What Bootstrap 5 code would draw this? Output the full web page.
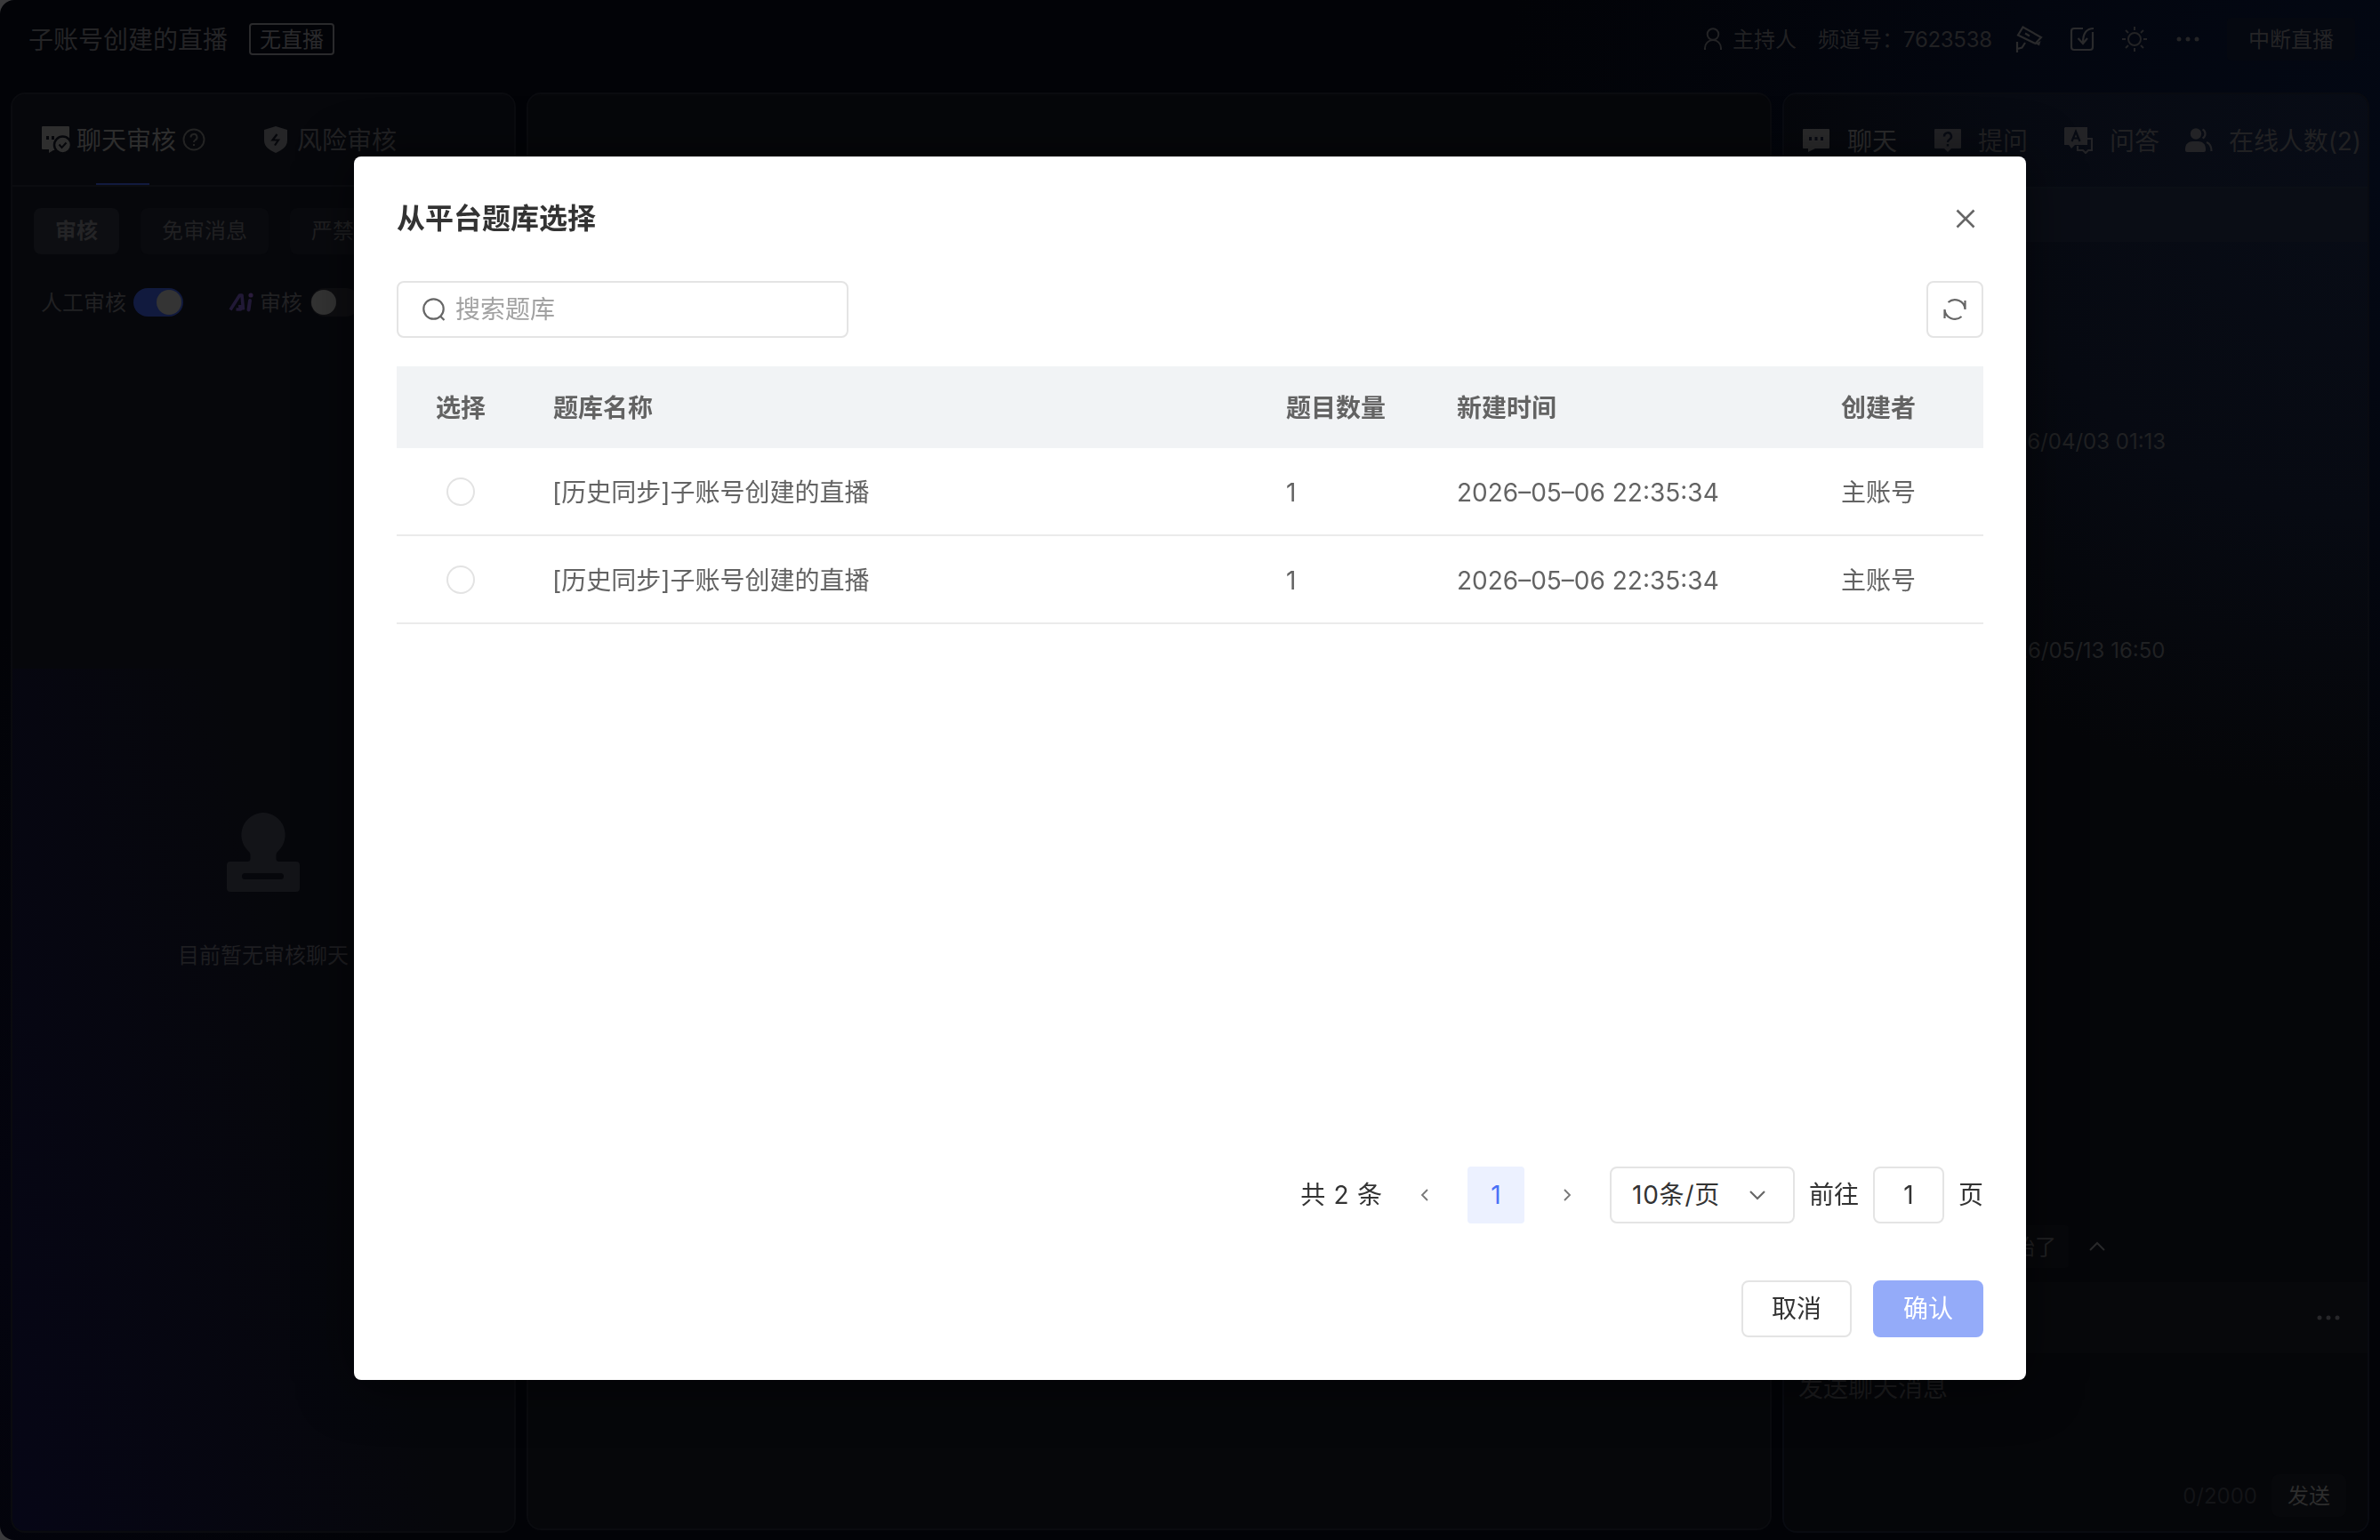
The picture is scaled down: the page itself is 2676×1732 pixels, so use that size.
<!DOCTYPE html>
<html lang="zh-CN">
<head>
<meta charset="utf-8">
<title>直播管理</title>
<link rel="stylesheet" href="https://cdn.jsdelivr.net/npm/bootstrap@5.3.0/dist/css/bootstrap.min.css">
<style>
html{background:#3a3a3c;font-size:16px}
body{width:2676px;height:1732px;margin:0;overflow:hidden;font-family:Inter,"Noto Sans CJK SC",sans-serif;font-size:24px;line-height:1;color:#212123;background:#3a3a3c}
svg{display:block;flex:none}
.shell{height:1732px;border-radius:16px 0 0 16px;overflow:hidden;background:radial-gradient(ellipse 1000px 900px at 2676px 200px,#030814 0,#03060f 45%,rgba(2,3,7,0) 100%),radial-gradient(ellipse 500px 700px at 0 1400px,#04040f 0,rgba(2,3,7,0) 100%),#020307}
.topbar{height:104px;padding:0 28px 16px 32px}
.topbar span,.tabs-l span,.tabs-r span,.send-btn,.quick{padding-top:2px}
.room-title{font-size:28px;color:#242426}
.live-tag{width:96px;height:36px;border:2px solid #2a2a2c;border-radius:4px;margin-left:24px;color:#2a2a2c}
.stop-btn{width:144px;height:48px;border-radius:4px;background:#050810;color:#242426}
.panels{height:1620px;padding:0 12px}
.pane{border:2px solid #0a0b0f;border-radius:16px;background:#06070b}
.pane-left{width:568px;margin-right:12px;background:linear-gradient(75deg,#060616 0,rgba(6,7,11,0) 60%) bottom/100% 60% no-repeat,#06070b}
.pane-mid{width:1400px;margin-right:12px;height:1617px;background:#06070a}
.pane-right{width:660px;overflow:hidden;border-color:#090b11;background:radial-gradient(ellipse 760px 700px at 100% 90px,#080c16 0,#070a12 55%,rgba(5,6,10,0) 100%),#050609}
.tabs-l{height:104px;border-bottom:2px solid #0b0c10;padding-left:33px;font-size:28px}
.tab-on{position:relative;color:#2d2d2d}
.tab-on::after{content:"";position:absolute;left:61px;width:60px;height:2px;bottom:0;background:#111a3f}
.chip{height:52px;border-radius:8px;padding:0 24px;background:#090a0e;color:#202022}
.chip-on{background:#0d0e12;font-weight:600;color:#242426}
.toggle{width:56px;height:32px;border-radius:16px;padding:2px;background:#0e0e11}
.toggle i{width:28px;height:28px;border-radius:50%;background:#343434}
.toggle-on{background:#111a3e}
.tabs-r{height:104px;padding-left:21px;font-size:28px;color:#212123}
.notice-band{height:62px;background:#0a0d15;border-top:2px solid #0b0f16}
.stamp-time{height:24px;text-align:center;padding-left:2px;color:#202123}
.quick{width:200px;height:48px;border-radius:4px;background:#07080b;color:#222224;padding-right:14px}
.tool-band{height:80px;background:#07080b}
.send-btn{width:84px;height:48px;border-radius:8px;background:#07080b;color:#2d2d2d}
.modal-dialog.bank{width:1880px;max-width:none;margin:176px 0 0 398px}
.bank .modal-content{height:1376px;border:0;border-radius:8px;padding:0 48px;color:#333;font-size:28px;box-shadow:0 4px 60px rgba(0,0,0,.55)}
.bank-head{height:140px}
.bank-head h2{font-size:32px;font-weight:600;line-height:1;color:#333}
.field{border:2px solid #e4e4e4;border-radius:8px;background:#fff;height:64px}
.search{width:508px;padding-left:27px}
.search input{border:0;outline:0;padding:1px 0 0;width:400px;font-size:28px;line-height:1.4;background:none}
.search input::placeholder{color:#a2a2a2;opacity:1}
.bank-table{margin:32px 0 0;table-layout:fixed;width:1784px;color:#636363;border-collapse:separate;border-spacing:0}
.bank-table>:not(caption)>*>*{padding:2px 0 0 32px;color:#636363;border-bottom:2px solid #ebebeb;height:99px;line-height:1;box-shadow:none;vertical-align:middle}
.bank-table>thead>tr>th{height:92px;border:0;background:#f1f3f5;font-weight:600}
.bank-table>tbody>tr>td:nth-child(2){padding-left:31px}
.bank-table>:not(caption)>*>:first-child{padding:0;text-align:center}
.bank-table>thead>tr>:first-child{padding-top:2px}
.bank-table .form-check-input{width:32px;height:32px;float:none;border:2px solid #e3e3e3;display:block;margin:0 auto}
.page-on{width:64px;height:64px;border-radius:4px;background:#ecf1ff;color:#4a71f6}
.btn-dlg{width:124px;height:64px;border-radius:8px;font-size:28px;line-height:1;padding:0;border:2px solid #e4e4e4;background:#fff;color:#333}
.btn-dlg.btn-primary{background:#94abf9;border-color:#94abf9;color:#fff;margin-left:24px}
</style>
</head>
<body>
<div class="shell">
  <header class="topbar d-flex align-items-center">
    <span class="room-title">子账号创建的直播</span>
    <span class="live-tag d-flex align-items-center justify-content-center">无直播</span>
    <div class="ms-auto d-flex align-items-center">
      <svg width="20" height="26" viewBox="0 0 20 26" fill="none" stroke="#232325" stroke-width="2"><circle cx="10" cy="7.500" r="6.300"/><path d="M1 25v-2a9 9 0 0 1 18 0v2"/></svg>
      <span style="margin-left:12px">主持人</span>
      <span style="margin-left:24px;width:196px" class="text-nowrap">频道号：<span style="letter-spacing:-.3px">7623538</span></span>
      <svg style="margin-left:26px" width="32" height="32" viewBox="0 0 32 32" fill="none" stroke="#2a2a2c" stroke-width="2.200"><path d="M8.500 2.500L29 14l-6.500 7L3 11.500zM11 9.500l5 3M2 19v12M2 27l5.500-1.500L11 20"/><path d="M22.500 21l6-3-1.500 5.500z" fill="#2a2a2c" stroke="none"/></svg>
      <svg style="margin-left:29px" width="28" height="28" viewBox="0 0 28 28" fill="none" stroke="#2a2a2c" stroke-width="2.200"><path d="M15 2H5a3 3 0 0 0-3 3v18a3 3 0 0 0 3 3h18a3 3 0 0 0 3-3V6M27 2c-8 0-12 5-12 16M9.500 13l5.500 6 5-6"/></svg>
      <svg style="margin-left:30px" width="30" height="30" viewBox="0 0 30 30" fill="none" stroke="#232325" stroke-width="2"><circle cx="15" cy="15" r="7"/><path d="M15 1v4M15 25v4M1 15h4M25 15h4M5 5l3 3M22 22l3 3M25 5l-3 3M8 22l-3 3"/></svg>
      <svg style="margin-left:32px" width="26" height="8" viewBox="0 0 26 8" fill="#242426"><circle cx="3" cy="4" r="2.500"/><circle cx="13" cy="4" r="2.500"/><circle cx="23" cy="4" r="2.500"/></svg>
      <span class="stop-btn d-flex align-items-center justify-content-center" style="margin-left:31px">中断直播</span>
    </div>
  </header>
  <main class="panels d-flex">
    <section class="pane pane-left d-flex flex-column">
      <div class="tabs-l d-flex">
        <div class="tab-on d-flex align-items-center">
          <svg width="32" height="32" viewBox="0 0 32 32"><path fill="#2e2e2e" d="M1 1h29a1 1 0 0 1 1 1v26H13l-5 3v-4H1a1 1 0 0 1-1-1V2a1 1 0 0 1 1-1z"/><path fill="#06070b" d="M5 12h3v4H5zM11 12h3v4h-3z"/><circle cx="23.500" cy="22" r="9.500" fill="#2e2e2e" stroke="#06070b" stroke-width="2.500"/><path fill="#06070b" d="M14 28.500h4l4 3.500h-9z"/><path d="M19.500 21.500l3 3.500 5-5.500" fill="none" stroke="#06070b" stroke-width="2"/></svg>
          <span style="margin-left:7px">聊天审核</span>
          <svg style="margin-left:7px" width="26" height="26" viewBox="0 0 26 26" fill="none" stroke="#232323" stroke-width="2"><circle cx="13" cy="13" r="11.500"/><path d="M9.500 10.500a3.500 3.500 0 1 1 5 3c-1 .6-1.500 1-1.500 2.500M13 18v2"/></svg>
        </div>
        <div class="d-flex align-items-center" style="margin-left:65px">
          <svg width="28" height="30" viewBox="0 0 28 30"><path fill="#252527" d="M14 0l13 4v12c0 7-6 11-13 14C7 27 1 23 1 16V4z"/><path d="M15.500 9l-5 6.500h6.500l-4 6" fill="none" stroke="#06070b" stroke-width="2.200"/></svg>
          <span style="margin-left:10px">风险审核</span>
        </div>
      </div>
      <div class="d-flex" style="padding:24px 0 0 24px;gap:24px">
        <span class="chip chip-on d-flex align-items-center">审核</span>
        <span class="chip d-flex align-items-center">免审消息</span>
        <span class="chip d-flex align-items-center">严禁词</span>
      </div>
      <div class="d-flex align-items-center" style="padding:38px 0 0 32px">
        <span style="padding-top:2px">人工审核</span>
        <span class="toggle toggle-on d-flex justify-content-end" style="margin-left:8px"><i></i></span>
        <svg style="margin-left:51px" width="28" height="22" viewBox="0 0 28 22"><path d="M2 19.500L12.500 3h2.500l1.500 16.500M8.500 19h5l-1-5" fill="none" stroke="#211936" stroke-width="3.600" stroke-linejoin="round"/><path d="M24 9l-1.500 10.500" stroke="#211936" stroke-width="4" stroke-linecap="round"/><circle cx="25" cy="3" r="2.600" fill="#2a1c3c"/></svg>
        <span style="margin-left:7px;padding-top:2px">审核</span>
        <span class="toggle d-flex" style="margin-left:9px;padding-left:1px"><i></i></span>
      </div>
      <div class="d-flex flex-column align-items-center" style="padding-top:558px">
        <svg width="82" height="90" viewBox="0 0 82 90"><path fill="#131418" fill-rule="evenodd" d="M41 0a25 25 0 0 1 17 43c-2 2-2.500 3-2.500 5v3c0 3 1 4 4 4H78a4 4 0 0 1 4 4v26a4 4 0 0 1-4 4H4a4 4 0 0 1-4-4V59a4 4 0 0 1 4-4h18.500c3 0 4-1 4-4v-3c0-2-.5-3-2.500-5A25 25 0 0 1 41 0zM20.500 68a3.500 3.500 0 0 0 0 7h40a3.500 3.500 0 0 0 0-7z"/></svg>
        <span style="margin-top:59px;color:#1e1e21">目前暂无审核聊天</span>
      </div>
    </section>
    <section class="pane pane-mid"></section>
    <section class="pane pane-right d-flex flex-column">
      <div class="tabs-r d-flex align-items-center text-nowrap">
        <svg width="30" height="26" viewBox="0 0 30 26"><path fill="#2b2b2c" d="M1 0h28a1 1 0 0 1 1 1v20a1 1 0 0 1-1 1H14l-8 4v-4H1a1 1 0 0 1-1-1V1a1 1 0 0 1 1-1z"/><path fill="#080b13" d="M7 9h3v4H7zM13.500 9h3v4h-3zM20 9h3v4h-3z"/></svg>
        <span style="margin-left:20px;color:#2b2b2c">聊天</span>
        <svg style="margin-left:42px" width="30" height="26" viewBox="0 0 30 26"><path fill="#232326" d="M1 0h28a1 1 0 0 1 1 1v20a1 1 0 0 1-1 1H19l-4 4-4-4H1a1 1 0 0 1-1-1V1a1 1 0 0 1 1-1z"/><path d="M11 8.500a4 4 0 1 1 6 3.300c-1.500 1-2 1.500-2 3.200M15 17v2.500" fill="none" stroke="#080b13" stroke-width="2.400"/></svg>
        <span style="margin-left:19px">提问</span>
        <svg style="margin-left:41px" width="32" height="30" viewBox="0 0 32 30"><path d="M26 13h5v13h-4l-3 3-3-3h-6v-5" fill="none" stroke="#232326" stroke-width="2.200"/><path fill="#232326" d="M1 0h25v20H12l-4 4-3-4H0V1z"/><path d="M8.500 16L13 5l4.500 11M10.500 12.500h5" fill="none" stroke="#080b13" stroke-width="2.200"/></svg>
        <span style="margin-left:19px">问答</span>
        <svg style="margin-left:29px" width="32" height="28" viewBox="0 0 32 28"><circle cx="12" cy="6.500" r="6.200" fill="#232326"/><path fill="#232326" d="M0 25v-2c0-5 4-8 8-8h7c4 0 8 3 8 8v2a2 2 0 0 1-2 2H2a2 2 0 0 1-2-2z"/><path d="M19.500 1.500c4 2 4 8 0 10M24 16c4 1.500 5.500 5 5.500 10" fill="none" stroke="#232326" stroke-width="2.200"/></svg>
        <span style="margin-left:17px;letter-spacing:-.1px">在线人数(2)</span>
      </div>
      <div class="notice-band"></div>
      <div class="stamp-time" style="margin-top:213px">2026/04/03 01:13</div>
      <div class="stamp-time" style="margin-top:211px">2026/05/13 16:50</div>
      <div class="d-flex align-items-center" style="margin:634px 0 0 120px">
        <span class="quick d-flex align-items-center justify-content-end text-nowrap">直播开始了</span>
        <svg style="margin-left:22px" width="20" height="12" viewBox="0 0 20 12" fill="none" stroke="#29292a" stroke-width="2"><path d="M2 10l8-8 8 8"/></svg>
      </div>
      <div class="tool-band d-flex align-items-center justify-content-end" style="margin-top:16px;padding-right:31px">
        <svg width="26" height="8" viewBox="0 0 26 8" fill="#27272a"><circle cx="3" cy="4" r="2.500"/><circle cx="13" cy="4" r="2.500"/><circle cx="23" cy="4" r="2.500"/></svg>
      </div>
      <div style="margin:25px 0 0 16px;font-size:28px;color:#1c1c1e">发送聊天消息</div>
      <div class="d-flex align-items-center justify-content-end" style="margin-top:83px;padding-right:24px">
        <span style="color:#131417;margin-right:16px;padding-top:2px">0/2000</span>
        <span class="send-btn d-flex align-items-center justify-content-center">发送</span>
      </div>
    </section>
  </main>
</div>

<div class="modal d-block" tabindex="-1">
  <div class="modal-dialog bank">
    <div class="modal-content">
      <div class="bank-head d-flex align-items-center justify-content-between">
        <h2 class="m-0">从平台题库选择</h2>
        <svg style="margin-right:9px" width="22" height="22" viewBox="0 0 22 22" fill="none" stroke="#666" stroke-width="2.600"><path d="M1.500 1.500l19 19M20.500 1.500l-19 19"/></svg>
      </div>
      <div class="d-flex justify-content-between">
        <label class="field search d-flex align-items-center">
          <svg width="26" height="26" viewBox="0 0 26 26" fill="none" stroke="#666" stroke-width="2.200"><circle cx="12.500" cy="12.500" r="11.200"/><path d="M19.500 20l5 5"/></svg>
          <input style="margin-left:11px" type="text" placeholder="搜索题库">
        </label>
        <span class="field d-flex align-items-center justify-content-center" style="width:64px">
          <svg width="28" height="28" viewBox="0 0 28 28" fill="none" stroke="#666" stroke-width="2.200"><path d="M6.500 6A11.500 11.500 0 0 1 25.500 14V4M21.500 22A11.500 11.500 0 0 1 2.500 14v10"/></svg>
        </span>
      </div>
      <table class="table bank-table">
        <colgroup><col style="width:144px"><col style="width:824px"><col style="width:192px"><col style="width:432px"><col></colgroup>
        <thead><tr><th>选择</th><th>题库名称</th><th>题目数量</th><th>新建时间</th><th>创建者</th></tr></thead>
        <tbody>
          <tr><td><input class="form-check-input" type="radio" name="bank"></td><td>[历史同步]子账号创建的直播</td><td>1</td><td>2026–05–06 22:35:34</td><td>主账号</td></tr>
          <tr><td><input class="form-check-input" type="radio" name="bank"></td><td>[历史同步]子账号创建的直播</td><td>1</td><td>2026–05–06 22:35:34</td><td>主账号</td></tr>
        </tbody>
      </table>
      <div class="d-flex align-items-center justify-content-end mt-auto text-nowrap">
        <span style="word-spacing:1.500px">共 2 条</span>
        <svg style="margin-left:43px" width="10" height="16" viewBox="0 0 10 16" fill="none" stroke="#777" stroke-width="1.800"><path d="M8 2L2 8l6 6"/></svg>
        <span class="page-on d-flex align-items-center justify-content-center" style="margin:0 43px">1</span>
        <svg width="10" height="16" viewBox="0 0 10 16" fill="none" stroke="#777" stroke-width="1.800"><path d="M2 2l6 6-6 6"/></svg>
        <span class="field d-flex align-items-center justify-content-between" style="width:208px;margin:0 16px 0 43px;padding:0 30px 0 23px"><span style="letter-spacing:.8px">10条/页</span>
          <svg width="20" height="12" viewBox="0 0 20 12" fill="none" stroke="#666" stroke-width="2.200"><path d="M2 2l8 8 8-8"/></svg>
        </span>
        <span>前往</span>
        <span class="field d-flex align-items-center justify-content-center" style="width:80px;margin:0 16px">1</span>
        <span>页</span>
      </div>
      <div class="d-flex justify-content-end" style="padding:64px 0 48px">
        <button class="btn btn-dlg" type="button">取消</button>
        <button class="btn btn-primary btn-dlg" type="button">确认</button>
      </div>
    </div>
  </div>
</div>
<script src="https://cdn.jsdelivr.net/npm/bootstrap@5.3.0/dist/js/bootstrap.bundle.min.js"></script>
</body>
</html>
